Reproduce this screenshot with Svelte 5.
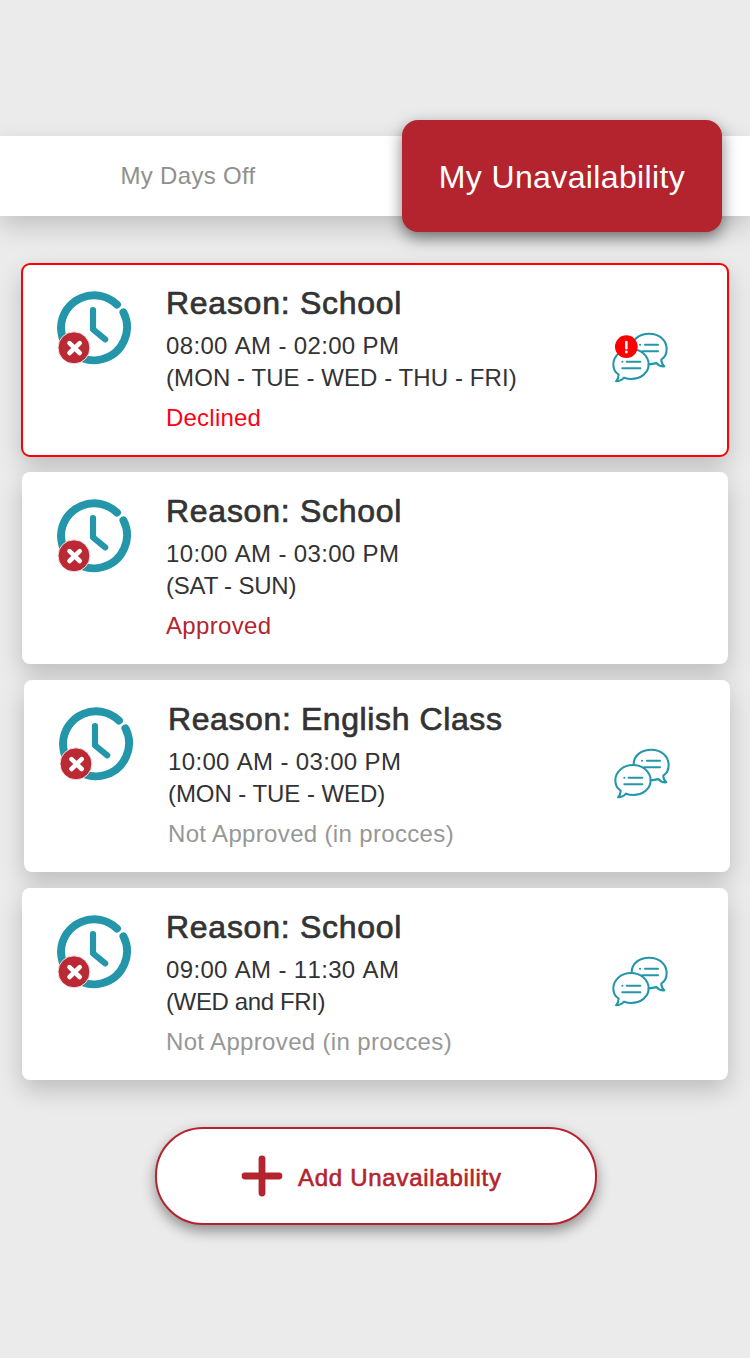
<script>
  const entries = [
    { title: 'Reason: School', hours: '08:00 AM - 02:00 PM', days: '(MON - TUE - WED - THU - FRI)', status: 'Declined', kind: 'declined', chat: true, alert: true },
    { title: 'Reason: School', hours: '10:00 AM - 03:00 PM', days: '(SAT - SUN)', status: 'Approved', kind: 'approved', chat: false },
    { title: 'Reason: English Class', hours: '10:00 AM - 03:00 PM', days: '(MON - TUE - WED)', status: 'Not Approved (in procces)', kind: 'pending', chat: true, shifted: true },
    { title: 'Reason: School', hours: '09:00 AM - 11:30 AM', days: '(WED and FRI)', status: 'Not Approved (in procces)', kind: 'pending', chat: true }
  ];
</script>

<main>
  <nav>
    <button class="tab">My Days Off</button>
    <button class="tab active">My Unavailability</button>
  </nav>

  <section class="list">
    {#each entries as e}
      <article class="card {e.kind}" class:shifted={e.shifted}>
        <svg class="clock" viewBox="0 0 80 80" width="80" height="80" fill="none" stroke-linecap="round" stroke-linejoin="round">
          <path d="M63 16.6A33 33 0 0 0 7 39.9A33 33 0 1 0 69.4 24.3" stroke="#2396aa" stroke-width="7.9" />
          <path d="M39 22V41.4L51.2 51.3" stroke="#2396aa" stroke-width="6.2" />
          <circle cx="20" cy="59.8" r="16" fill="#b92a35" stroke="#f6e4e5" stroke-width="1" />
          <path d="M15.5 55.1L25.7 65M25.7 55.1L15.5 65" stroke="#fff" stroke-width="4.6" />
        </svg>
        <div class="info">
          <h2>{e.title}</h2>
          <p class="hours">{e.hours}</p>
          <p class="days">{e.days}</p>
          <p class="status">{e.status}</p>
        </div>
        {#if e.chat}
          <svg class="chat" viewBox="0 0 240 210" width="80" height="70" fill="none" stroke="#2396aa" stroke-width="6.2" stroke-linecap="round" stroke-linejoin="round">
            <path d="M101 73C101 46 125 29 154 29S206 48 206 76C206 90 199 101 190 107C190 115 193 122 199 127C190 128 182 125 175 117C168 120 160 120 152 121" />
            <path d="M62 152C50 145 46 133 46 121C46 95 70 75 99 75S152 95 152 121S128 165 99 165C91 165 84 163 78 161C72 168 63 172 54 172C59 166 62 160 62 152Z" />
            <path d="M126 62H126.2M141 62H180M134 82H180M73 113H73.2M86 113H127M73 133H127" />
            {#if e.alert}
              <circle cx="85" cy="68" r="34" fill="#f00" stroke="none" />
              <path d="M85 54V73" stroke="#fff" stroke-width="7.5" />
              <circle cx="85" cy="84" r="4.2" fill="#fff" stroke="none" />
            {/if}
          </svg>
        {/if}
      </article>
    {/each}
  </section>

  <button class="add">
    <svg viewBox="0 0 42 42" width="42" height="42" stroke="#b4242e" stroke-width="6.8" stroke-linecap="round">
      <path d="M21 4V38M4 21H38" />
    </svg>
    <span>Add Unavailability</span>
  </button>
</main>

<style>
  :global(body) { margin: 0; background: #ebebeb; }
  main {
    box-sizing: border-box;
    min-height: 1358px;
    padding-top: 136px;
    overflow: hidden;
    background: #ebebeb;
    color: #333;
    font-family: "Liberation Sans", Arial, sans-serif;
    display: flex;
    flex-direction: column;
  }
  button { border: 0; padding: 0; font-family: inherit; background: none; white-space: nowrap; }
  nav {
    height: 80px;
    display: flex;
    align-items: center;
    background: #fff;
    box-shadow: 0 10px 24px rgba(0, 0, 0, .18);
  }
  .tab { width: 376px; height: 80px; font-size: 24px; letter-spacing: .3px; color: #8f8f8f; }
  .active {
    flex: none;
    width: 320px;
    height: 112px;
    margin-left: 26px;
    border-radius: 16px;
    background: #b4242e;
    color: #fff;
    font-size: 32px;
    letter-spacing: .37px;
    padding-top: 2px;
    box-shadow: 0 6px 16px rgba(0, 0, 0, .5);
  }
  .list { display: flex; flex-direction: column; gap: 16px; padding: 48px 22px 0; }
  .card {
    box-sizing: border-box;
    height: 192px;
    display: flex;
    padding: 19px 50px 0 32px;
    border-radius: 8px;
    background: #fff;
    box-shadow: 0 10px 24px rgba(0, 0, 0, .2);
  }
  .shifted { margin: 0 -2px 0 2px; }
  .declined { outline: 2px solid #f00; outline-offset: -1px; }
  .clock { flex: none; margin-top: 5px; }
  .info { flex: 1; margin-left: 32px; }
  .chat { flex: none; margin-top: 41px; }
  h2 {
    margin: 0 0 7px;
    font-size: 32px;
    font-weight: 400;
    line-height: 40px;
    -webkit-text-stroke: .7px currentColor;
    letter-spacing: .73px;
  }
  .shifted h2 { letter-spacing: .6px; }
  p { margin: 0; font-size: 24px; line-height: 32px; white-space: nowrap; letter-spacing: .34px; }
  .hours { letter-spacing: .34px; font-kerning: none; }
  .days { letter-spacing: .08px; }
  .approved .days { letter-spacing: -.2px; }
  .shifted .days { letter-spacing: -.06px; }
  .card:last-child .days { letter-spacing: -.38px; }
  .status { margin-top: 8px; color: #979797; }
  .declined .status { color: #fe0016; letter-spacing: .22px; }
  .approved .status { color: #b4242e; }
  .add {
    box-sizing: border-box;
    align-self: center;
    width: 442px;
    height: 98px;
    margin: 47px 0 0 2px;
    padding: 0 0 0 84px;
    display: flex;
    align-items: center;
    gap: 15px;
    border: 2px solid #b4242e;
    border-radius: 48px;
    background: #fff;
    color: #b4242e;
    font-size: 24px;
    letter-spacing: .72px;
    box-shadow: 0 6px 14px rgba(0, 0, 0, .4);
  }
  .add span { -webkit-text-stroke: .6px currentColor; padding-top: 3px; }
</style>
